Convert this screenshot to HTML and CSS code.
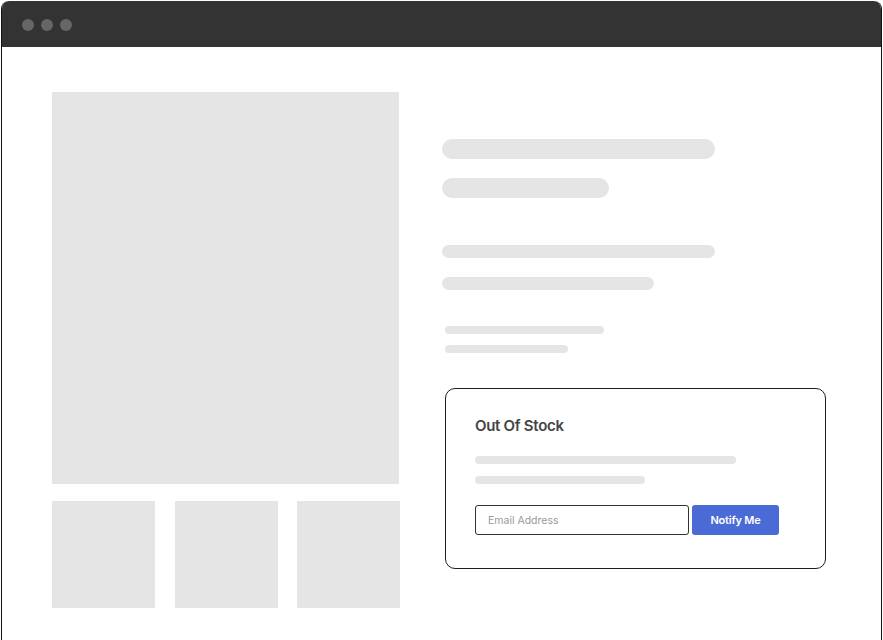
FILE: index.html
```html
<!DOCTYPE html>
<html lang="en">
<head>
    <meta charset="UTF-8">
    <meta name="viewport" content="width=device-width, initial-scale=1.0">
    <title>Product - Out Of Stock</title>
    <link rel="stylesheet" href="styles.css">
</head>
<body>
    <div class="window">
        <div class="titlebar">
            <span class="dot"></span>
            <span class="dot"></span>
            <span class="dot"></span>
        </div>

        <div class="page">
            <div class="gallery">
                <div class="main-image"></div>
                <div class="thumbs">
                    <div class="thumb"></div>
                    <div class="thumb"></div>
                    <div class="thumb"></div>
                </div>
            </div>

            <div class="details">
                <div class="pill pill-title"></div>
                <div class="pill pill-subtitle"></div>
                <div class="pill pill-price"></div>
                <div class="pill pill-info"></div>
                <div class="pill pill-small-1"></div>
                <div class="pill pill-small-2"></div>

                <div class="stock-card">
                    <h2>Out Of Stock</h2>
                    <div class="pill pill-card-1"></div>
                    <div class="pill pill-card-2"></div>
                    <form class="notify-form" onsubmit="return false">
                        <input type="email" placeholder="Email Address">
                        <button type="submit">Notify Me</button>
                    </form>
                </div>
            </div>
        </div>
    </div>
</body>
</html>
```

FILE: styles.css
```css
* {
    margin: 0;
    padding: 0;
    box-sizing: border-box;
}

body {
    font-family: Inter, 'Noto Sans', sans-serif;
    background: #ffffff;
    height: 100vh;
    overflow: hidden;
}

.window {
    margin: 1px 0 0 1px;
    width: 881px;
    height: 639px;
    overflow: hidden;
    border-left: 1px solid #111;
    border-right: 1px solid #111;
    border-radius: 8px 8px 0 0;
}

.titlebar {
    height: 46px;
    margin: 0 -1px;
    background: #333333;
    border-radius: 8px 8px 0 0;
    display: flex;
    align-items: center;
    gap: 7px;
    padding: 0 0 0 21px;
}

.dot {
    width: 12px;
    height: 12px;
    border-radius: 50%;
    background: #666666;
    margin-top: 1px;
}

.page {
    display: flex;
    padding: 45px 0 0 50px;
    gap: 42px;
}

.gallery {
    width: 348px;
    display: flex;
    flex-direction: column;
    gap: 17px;
}

.main-image {
    width: 347px;
    height: 392px;
    background: #e5e5e5;
}

.thumbs {
    display: grid;
    grid-template-columns: repeat(3, 103px);
    column-gap: 19.5px;
}

.thumb {
    height: 107px;
    background: #e5e5e5;
}

.details {
    display: flex;
    flex-direction: column;
    padding-top: 47px;
}

.pill {
    background: #e5e5e5;
    border-radius: 10px;
}

.pill-title {
    width: 273px;
    height: 20px;
}

.pill-subtitle {
    width: 167px;
    height: 20px;
    margin-top: 19px;
}

.pill-price {
    width: 273px;
    height: 13px;
    margin-top: 47px;
}

.pill-info {
    width: 212px;
    height: 13px;
    margin-top: 19px;
}

.pill-small-1 {
    width: 159px;
    height: 8px;
    margin: 36px 0 0 3px;
}

.pill-small-2 {
    width: 123px;
    height: 8px;
    margin: 11px 0 0 3px;
}

.stock-card {
    width: 381px;
    height: 181px;
    margin: 35px 0 0 3px;
    border: 1px solid #1e1e1e;
    border-radius: 10px;
    padding: 28px 29px 0;
    display: flex;
    flex-direction: column;
}

.stock-card h2 {
    font-size: 15px;
    font-weight: 600;
    line-height: 18px;
    letter-spacing: -0.3px;
    color: #444444;
}

.pill-card-1 {
    width: 261px;
    height: 8px;
    margin-top: 21px;
}

.pill-card-2 {
    width: 170px;
    height: 8px;
    margin-top: 12px;
}

.notify-form {
    display: flex;
    gap: 3px;
    margin-top: 21px;
}

.notify-form input {
    width: 214px;
    height: 30px;
    border: 1px solid #333;
    border-radius: 3px;
    padding: 0 12px;
    font-family: inherit;
    font-size: 10.5px;
    color: #333;
    outline: none;
}

.notify-form input::placeholder {
    color: #999999;
}

.notify-form button {
    width: 87px;
    height: 30px;
    border: none;
    border-radius: 3px;
    background: #4a6bd6;
    color: #ffffff;
    font-family: inherit;
    font-size: 11px;
    font-weight: 600;
    letter-spacing: -0.2px;
    cursor: pointer;
}
```
